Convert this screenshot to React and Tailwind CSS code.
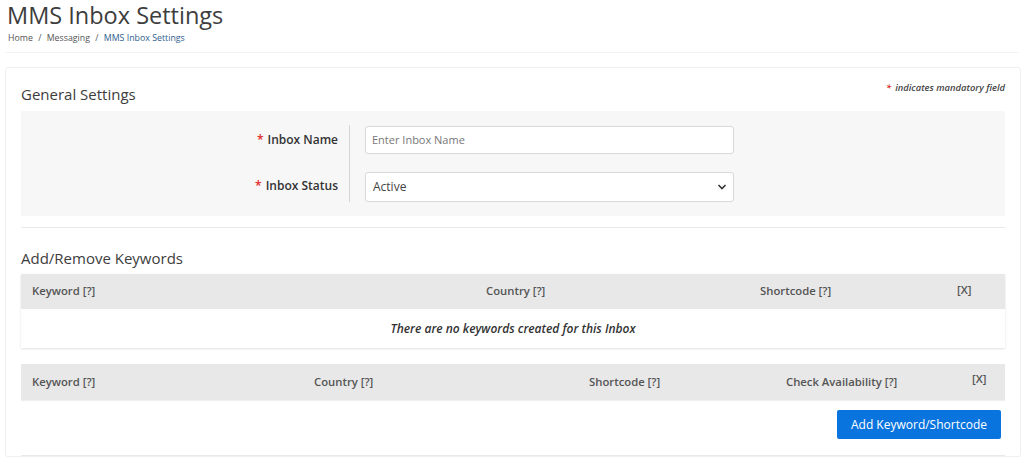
const FONT = { fontFamily: '"Open Sans", "Liberation Sans", sans-serif' };

function Req() {
    return <span className="text-[#e02424] mr-1">*</span>;
}

function HeadCell({ children, className }) {
    return <div className={"flex items-center text-[11.3px] font-semibold text-[#555] " + (className || '')}>{children}</div>;
}

export default function App() {
    return (
        <div className="w-[1024px] h-[460px] overflow-hidden bg-white text-[#333]" style={FONT}>
            {/* page header */}
            <div className="px-[7px] pt-0">
                <h1 className="text-[23.5px] leading-[30px] text-[#3d3d3d] font-normal">MMS Inbox Settings</h1>
                <div className="text-[8.8px] leading-[14px] mt-[1px] ml-[1px] text-[#555]">
                    Home <span className="mx-[3px]">/</span> Messaging <span className="mx-[3px]">/</span> <span className="text-[#2e5e8e]">MMS Inbox Settings</span>
                </div>
            </div>
            <div className="mx-[5px] mt-[7px] h-px bg-[#f3f3f3]" />

            {/* card */}
            <div className="mx-[5px] mt-[14px] w-[1016px] border border-[#efefef] rounded-[3px] px-[15px] pt-[10px]">
                <div className="flex items-end justify-between">
                    <h2 className="text-[15px] leading-[20px] text-[#3d3d3d] pt-[6px]">General Settings</h2>
                    <div className="text-[9.4px] italic font-semibold text-[#444] mb-[9px]">
                        <Req />indicates mandatory field
                    </div>
                </div>

                <div className="mt-[7px] bg-[#f7f7f7] h-[105px] flex items-center">
                    <div className="w-[328px] flex flex-col gap-[17px] items-end pr-[11px]">
                        <div className="h-[28px] flex items-center text-[12px] font-semibold text-[#333]"><Req />Inbox Name</div>
                        <div className="h-[30px] flex items-center text-[12px] font-semibold text-[#333]"><Req />Inbox Status</div>
                    </div>
                    <div className="w-px h-[77px] bg-[#d6d6d6]" />
                    <div className="ml-[15px] flex flex-col gap-[18px]">
                        <input type="text" placeholder="Enter Inbox Name"
                            className="w-[369px] h-[28px] px-[6px] bg-white border border-[#d8d8d8] rounded-[3px] text-[11px] placeholder:text-[#777] outline-none" />
                        <div className="relative w-[369px] h-[30px] bg-white border border-[#d8d8d8] rounded-[3px] flex items-center px-[7px] text-[12px] text-[#444]">
                            Active
                            <svg className="absolute right-[6px] top-[10px]" width="10" height="8" viewBox="0 0 10 8">
                                <path d="M1.5 2 L5 5.5 L8.5 2" fill="none" stroke="#333" strokeWidth="1.6" />
                            </svg>
                        </div>
                    </div>
                </div>

                <div className="mt-[11px] h-px bg-[#e9e9e9]" />

                <h2 className="mt-[20px] text-[15px] leading-[20px] text-[#3d3d3d]">Add/Remove Keywords</h2>

                {/* existing keywords table */}
                <div className="mt-[6px] shadow-[0_1px_2px_rgba(0,0,0,0.12)]">
                    <div className="h-[35px] bg-[#e8e8e8] flex">
                        <HeadCell className="w-[454px] pl-[11px]">Keyword [?]</HeadCell>
                        <HeadCell className="w-[274px] pl-[11px]">Country [?]</HeadCell>
                        <HeadCell className="w-[197px] pl-[11px]">Shortcode [?]</HeadCell>
                        <HeadCell className="flex-1 pl-[11px] pb-[3px]">[X]</HeadCell>
                    </div>
                    <div className="h-[39px] bg-white flex items-center justify-center text-[12px] italic font-semibold text-[#333]">
                        There are no keywords created for this Inbox
                    </div>
                </div>

                {/* new keyword table */}
                <div className="mt-[16px] h-[36px] bg-[#e8e8e8] flex shadow-[0_1px_1px_rgba(0,0,0,0.06)]">
                    <HeadCell className="w-[282px] pl-[11px]">Keyword [?]</HeadCell>
                    <HeadCell className="w-[275px] pl-[11px]">Country [?]</HeadCell>
                    <HeadCell className="w-[197px] pl-[11px]">Shortcode [?]</HeadCell>
                    <HeadCell className="w-[186px] pl-[11px]">Check Availability [?]</HeadCell>
                    <HeadCell className="flex-1 pl-[11px] pb-[5px]">[X]</HeadCell>
                </div>

                <div className="mt-[10px] flex justify-end pr-[4px]">
                    <button className="w-[164px] h-[29px] bg-[#0a74de] text-white text-[12px] rounded-[2px]">Add Keyword/Shortcode</button>
                </div>

                <div className="mt-[16px] h-px bg-[#e9e9e9]" />
            </div>
        </div>
    );
}
